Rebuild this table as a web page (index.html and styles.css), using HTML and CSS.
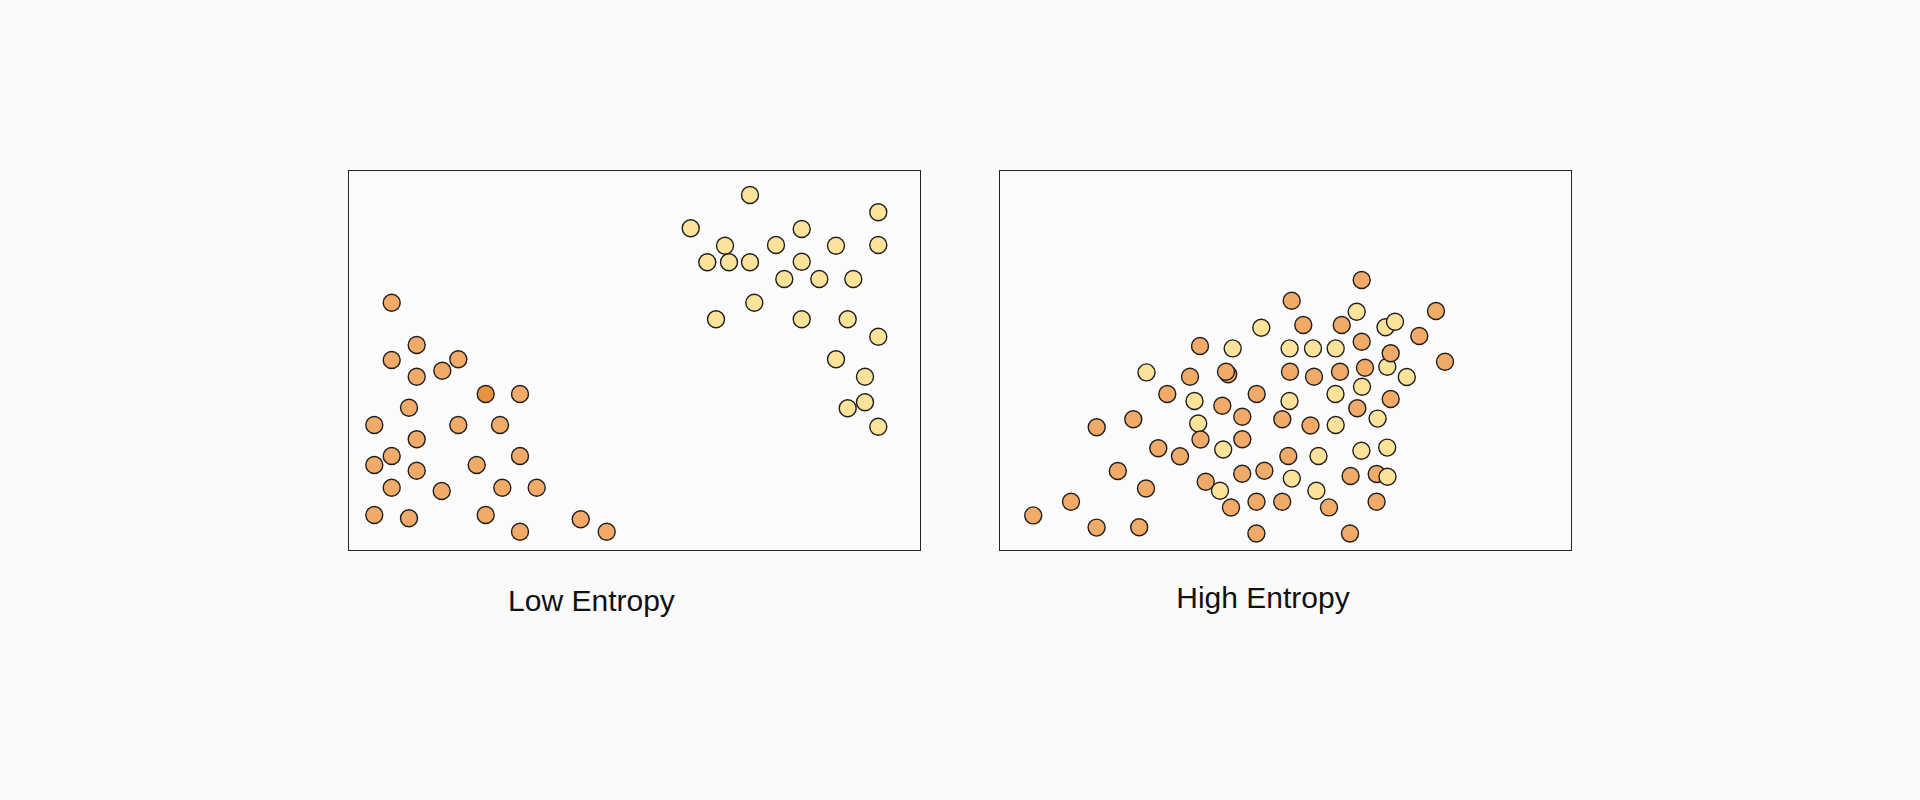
FILE: index.html
```html
<!DOCTYPE html>
<html lang="en">
<head>
<meta charset="utf-8">
<title>Low Entropy vs High Entropy</title>
<link rel="stylesheet" href="styles.css">
</head>
<body>
<main class="figure-row">
  <figure class="plot">
    <div class="panel">
      <svg class="canvas" viewBox="0 0 571 379" width="571" height="379">
        <g class="dots">
          <circle class="o" cx="42.7" cy="131.7" r="8.5"/>
          <circle class="o" cx="67.7" cy="174" r="8.5"/>
          <circle class="o" cx="42.7" cy="189" r="8.5"/>
          <circle class="o" cx="109.3" cy="188.3" r="8.5"/>
          <circle class="o" cx="67.7" cy="205.7" r="8.5"/>
          <circle class="o" cx="93.3" cy="199.7" r="8.5"/>
          <circle class="d" cx="136.7" cy="223" r="8.5"/>
          <circle class="o" cx="171" cy="223" r="8.5"/>
          <circle class="o" cx="60" cy="236.7" r="8.5"/>
          <circle class="o" cx="25.3" cy="254" r="8.5"/>
          <circle class="o" cx="109.3" cy="254" r="8.5"/>
          <circle class="o" cx="151" cy="254" r="8.5"/>
          <circle class="o" cx="67.7" cy="268.3" r="8.5"/>
          <circle class="o" cx="25.3" cy="294" r="8.5"/>
          <circle class="o" cx="42.7" cy="285" r="8.5"/>
          <circle class="o" cx="67.7" cy="299.7" r="8.5"/>
          <circle class="o" cx="127.7" cy="294" r="8.5"/>
          <circle class="o" cx="171" cy="285" r="8.5"/>
          <circle class="o" cx="42.7" cy="316.7" r="8.5"/>
          <circle class="o" cx="92.7" cy="320" r="8.5"/>
          <circle class="o" cx="153.3" cy="316.7" r="8.5"/>
          <circle class="o" cx="187.7" cy="316.7" r="8.5"/>
          <circle class="o" cx="25.3" cy="344" r="8.5"/>
          <circle class="o" cx="60" cy="347.3" r="8.5"/>
          <circle class="o" cx="136.7" cy="344" r="8.5"/>
          <circle class="o" cx="171" cy="360.7" r="8.5"/>
          <circle class="o" cx="231.7" cy="348.3" r="8.5"/>
          <circle class="o" cx="257.7" cy="360.7" r="8.5"/>

          <circle class="y" cx="401" cy="24" r="8.5"/>
          <circle class="y" cx="529.3" cy="41.3" r="8.5"/>
          <circle class="y" cx="341.7" cy="57.3" r="8.5"/>
          <circle class="y" cx="452.7" cy="58" r="8.5"/>
          <circle class="y" cx="376" cy="74.7" r="8.5"/>
          <circle class="y" cx="427" cy="74" r="8.5"/>
          <circle class="y" cx="487" cy="74.7" r="8.5"/>
          <circle class="y" cx="529.3" cy="74" r="8.5"/>
          <circle class="y" cx="358.3" cy="91.3" r="8.5"/>
          <circle class="y" cx="380" cy="91.3" r="8.5"/>
          <circle class="y" cx="401" cy="91.3" r="8.5"/>
          <circle class="y" cx="452.7" cy="90.7" r="8.5"/>
          <circle class="y" cx="435.3" cy="108" r="8.5"/>
          <circle class="y" cx="470.3" cy="108" r="8.5"/>
          <circle class="y" cx="504.3" cy="108" r="8.5"/>
          <circle class="y" cx="405.3" cy="131.7" r="8.5"/>
          <circle class="y" cx="367" cy="148.3" r="8.5"/>
          <circle class="y" cx="452.7" cy="148.3" r="8.5"/>
          <circle class="y" cx="498.7" cy="148.3" r="8.5"/>
          <circle class="y" cx="529.3" cy="165.7" r="8.5"/>
          <circle class="y" cx="487" cy="188.3" r="8.5"/>
          <circle class="y" cx="516" cy="205.7" r="8.5"/>
          <circle class="y" cx="516" cy="231.3" r="8.5"/>
          <circle class="y" cx="498.7" cy="237.3" r="8.5"/>
          <circle class="y" cx="529.3" cy="255.7" r="8.5"/>
        </g>
      </svg>
    </div>
    <figcaption class="caption caption--low">Low Entropy</figcaption>
  </figure>

  <figure class="plot">
    <div class="panel">
      <svg class="canvas" viewBox="0 0 571 379" width="571" height="379">
        <g class="dots">
          <circle class="y" cx="356.7" cy="140.7" r="8.5"/>
          <circle class="y" cx="261.3" cy="156.8" r="8.5"/>
          <circle class="y" cx="385.5" cy="156.3" r="8.5"/>
          <circle class="y" cx="395" cy="150.7" r="8.5"/>
          <circle class="y" cx="232.7" cy="177.4" r="8.5"/>
          <circle class="y" cx="289.6" cy="177.4" r="8.5"/>
          <circle class="y" cx="313" cy="177.4" r="8.5"/>
          <circle class="y" cx="335.7" cy="177.4" r="8.5"/>
          <circle class="y" cx="387.3" cy="195.8" r="8.5"/>
          <circle class="y" cx="406.8" cy="206" r="8.5"/>
          <circle class="y" cx="146.5" cy="201.4" r="8.5"/>
          <circle class="y" cx="194.5" cy="230" r="8.5"/>
          <circle class="y" cx="289.5" cy="230" r="8.5"/>
          <circle class="y" cx="335.5" cy="223" r="8.5"/>
          <circle class="y" cx="362" cy="215.8" r="8.5"/>
          <circle class="y" cx="198.2" cy="252.5" r="8.5"/>
          <circle class="y" cx="335.7" cy="254" r="8.5"/>
          <circle class="y" cx="377.6" cy="247.6" r="8.5"/>
          <circle class="y" cx="223.2" cy="278.5" r="8.5"/>
          <circle class="y" cx="318.5" cy="285" r="8.5"/>
          <circle class="y" cx="361.4" cy="279.8" r="8.5"/>
          <circle class="y" cx="387.2" cy="276.6" r="8.5"/>
          <circle class="y" cx="291.8" cy="307.6" r="8.5"/>
          <circle class="y" cx="316.4" cy="319.8" r="8.5"/>

          <circle class="o" cx="361.7" cy="109" r="8.5"/>
          <circle class="o" cx="291.7" cy="129.7" r="8.5"/>
          <circle class="o" cx="436" cy="140" r="8.5"/>
          <circle class="o" cx="303.3" cy="154" r="8.5"/>
          <circle class="o" cx="341.7" cy="154" r="8.5"/>
          <circle class="o" cx="419.3" cy="165" r="8.5"/>
          <circle class="o" cx="200" cy="175" r="8.5"/>
          <circle class="o" cx="361.7" cy="170.7" r="8.5"/>
          <circle class="o" cx="390.7" cy="182.3" r="8.5"/>
          <circle class="o" cx="445" cy="190.7" r="8.5"/>
          <circle class="o" cx="190" cy="205.7" r="8.5"/>
          <circle class="o" cx="228.2" cy="203.2" r="8.5"/>
          <circle class="o" cx="226" cy="200.7" r="8.5"/>
          <circle class="o" cx="290" cy="200.7" r="8.5"/>
          <circle class="o" cx="314" cy="205.7" r="8.5"/>
          <circle class="o" cx="340" cy="200.7" r="8.5"/>
          <circle class="o" cx="365" cy="196.7" r="8.5"/>
          <circle class="o" cx="167.3" cy="223" r="8.5"/>
          <circle class="o" cx="222.3" cy="234.7" r="8.5"/>
          <circle class="o" cx="256.7" cy="223" r="8.5"/>
          <circle class="o" cx="390.7" cy="228" r="8.5"/>
          <circle class="o" cx="357.3" cy="237.3" r="8.5"/>
          <circle class="o" cx="133.3" cy="248.3" r="8.5"/>
          <circle class="o" cx="96.7" cy="256.3" r="8.5"/>
          <circle class="o" cx="242.3" cy="245.7" r="8.5"/>
          <circle class="o" cx="282.3" cy="248.3" r="8.5"/>
          <circle class="o" cx="310.5" cy="254.5" r="8.5"/>
          <circle class="o" cx="158.3" cy="277.3" r="8.5"/>
          <circle class="o" cx="180" cy="285.3" r="8.5"/>
          <circle class="o" cx="200.5" cy="268.5" r="8.5"/>
          <circle class="o" cx="242.3" cy="268.3" r="8.5"/>
          <circle class="o" cx="288.3" cy="285" r="8.5"/>
          <circle class="o" cx="117.8" cy="300" r="8.5"/>
          <circle class="o" cx="146" cy="317.5" r="8.5"/>
          <circle class="o" cx="205.7" cy="310.7" r="8.5"/>
          <circle class="o" cx="242.2" cy="302.8" r="8.5"/>
          <circle class="o" cx="264.4" cy="299.8" r="8.5"/>
          <circle class="o" cx="350.6" cy="305" r="8.5"/>
          <circle class="o" cx="376.7" cy="303" r="8.5"/>
          <circle class="o" cx="71" cy="330.8" r="8.5"/>
          <circle class="o" cx="33.2" cy="344.4" r="8.5"/>
          <circle class="o" cx="96.6" cy="356.6" r="8.5"/>
          <circle class="o" cx="139.2" cy="356.2" r="8.5"/>
          <circle class="o" cx="231" cy="336.5" r="8.5"/>
          <circle class="o" cx="256.5" cy="330.8" r="8.5"/>
          <circle class="o" cx="282.2" cy="330.8" r="8.5"/>
          <circle class="o" cx="329" cy="336.4" r="8.5"/>
          <circle class="o" cx="376.6" cy="330.8" r="8.5"/>
          <circle class="o" cx="256.4" cy="362.5" r="8.5"/>
          <circle class="o" cx="350" cy="362.5" r="8.5"/>

          <circle class="y" cx="220" cy="319.8" r="8.5"/>
          <circle class="y" cx="387.5" cy="305.8" r="8.5"/>
        </g>
      </svg>
    </div>
    <figcaption class="caption caption--high">High Entropy</figcaption>
  </figure>
</main>
</body>
</html>
```

FILE: styles.css
```css
html, body {
  margin: 0;
  padding: 0;
}

body {
  background: #fafafa;
  font-family: "Liberation Sans", Arial, sans-serif;
  color: #111111;
}

.figure-row {
  display: flex;
  justify-content: center;
  align-items: flex-start;
  gap: 78px;
  padding-top: 170px;
}

.plot {
  margin: 0;
  display: flex;
  flex-direction: column;
  width: 573px;
}

.panel {
  box-sizing: border-box;
  width: 573px;
  height: 381px;
  border: 1px solid #252525;
  background: #fbfbfb;
}

.canvas {
  display: block;
  width: 571px;
  height: 379px;
}

.dots circle {
  stroke: #1e1e1e;
  stroke-width: 1.4;
}

.dots .o {
  fill: #f1aa67;
}

.dots .y {
  fill: #fde29a;
}

.dots .d {
  fill: #e8943f;
}

.caption {
  font-size: 30px;
  line-height: 33px;
  text-align: center;
  white-space: nowrap;
}

.caption--low {
  margin-top: 33px;
  padding-right: 86px;
}

.caption--high {
  margin-top: 30px;
  padding-right: 45px;
}
```
